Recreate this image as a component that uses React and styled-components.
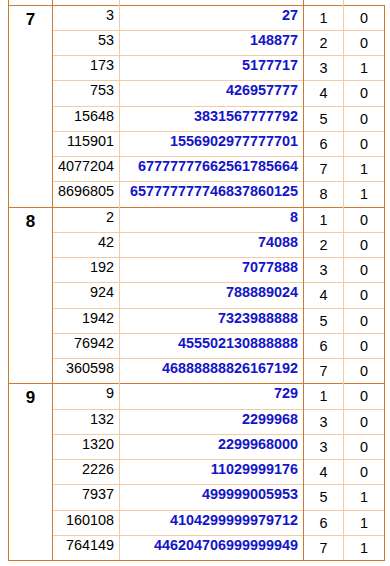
import styled, { createGlobalStyle } from 'styled-components';

const DARK = '#cc7a33';
const LIGHT = '#f2cba5';

const groups = [
  {
    k: 7,
    rows: [
      ['3', '27', 1, 0],
      ['53', '148877', 2, 0],
      ['173', '5177717', 3, 1],
      ['753', '426957777', 4, 0],
      ['15648', '3831567777792', 5, 0],
      ['115901', '1556902977777701', 6, 0],
      ['4077204', '67777777662561785664', 7, 1],
      ['8696805', '657777777746837860125', 8, 1],
    ],
  },
  {
    k: 8,
    rows: [
      ['2', '8', 1, 0],
      ['42', '74088', 2, 0],
      ['192', '7077888', 3, 0],
      ['924', '788889024', 4, 0],
      ['1942', '7323988888', 5, 0],
      ['76942', '455502130888888', 6, 0],
      ['360598', '46888888826167192', 7, 0],
    ],
  },
  {
    k: 9,
    rows: [
      ['9', '729', 1, 0],
      ['132', '2299968', 3, 0],
      ['1320', '2299968000', 3, 0],
      ['2226', '11029999176', 4, 0],
      ['7937', '499999005953', 5, 1],
      ['160108', '4104299999979712', 6, 1],
      ['764149', '446204706999999949', 7, 1],
    ],
  },
];

const GlobalStyle = createGlobalStyle`
  html, body {
    margin: 0;
    background: #fff;
  }
  body {
    font-family: 'Liberation Sans', Arial, sans-serif;
  }
`;

const Page = styled.div`
  padding: 0 5px 0 8px;
`;

const Table = styled.table`
  width: 377px;
  table-layout: fixed;
  border-collapse: collapse;
  font-size: 14.4px;
  color: #000;
`;

const StubRow = styled.tr`
  height: 4.5px;
`;

const Row = styled.tr`
  height: 25.25px;
`;

const Cell = styled.td`
  border: 0;
  border-left: 1px solid ${({ $leftDark }) => ($leftDark ? DARK : LIGHT)};
  border-top: 1px solid ${({ $topDark }) => ($topDark ? DARK : LIGHT)};
  border-bottom: ${({ $last }) => ($last ? `1px solid ${DARK}` : '0')};
  white-space: nowrap;
  line-height: normal;
`;

const StubCell = styled(Cell)`
  border-top: 0;
  padding: 0;
  height: 4.5px;
`;

const GroupCell = styled(Cell)`
  vertical-align: top;
  text-align: center;
  padding: 4px 0 0;
  font-size: 17px;
  font-weight: 700;
`;

const NumCell = styled(Cell)`
  vertical-align: top;
  text-align: right;
  padding: 1px 5px 0 0;
`;

const CubeCell = styled(NumCell)`
  font-weight: 700;
  color: #1414c8;
`;

const SmallCell = styled(Cell)`
  vertical-align: middle;
  text-align: center;
  padding: 0;
  border-right: ${({ $end }) => ($end ? `1px solid ${DARK}` : '0')};
`;

export default function App() {
  return (
    <>
      <GlobalStyle />
      <Page>
        <Table>
          <colgroup>
            <col style={{ width: 44 }} />
            <col style={{ width: 67 }} />
            <col style={{ width: 184 }} />
            <col style={{ width: 40 }} />
            <col style={{ width: 41 }} />
          </colgroup>
          <tbody>
            <StubRow>
              <StubCell $leftDark />
              <StubCell $leftDark />
              <StubCell />
              <StubCell $leftDark />
              <StubCell />
            </StubRow>
            {groups.map((g, gi) =>
              g.rows.map(([n, cube, idx, flag], ri) => {
                const first = ri === 0;
                const last = gi === groups.length - 1 && ri === g.rows.length - 1;
                return (
                  <Row key={`${g.k}-${n}`}>
                    {first && (
                      <GroupCell
                        rowSpan={g.rows.length}
                        $leftDark
                        $topDark
                        $last={gi === groups.length - 1}
                      >
                        {g.k}
                      </GroupCell>
                    )}
                    <NumCell $leftDark $topDark={first} $last={last}>{n}</NumCell>
                    <CubeCell $topDark={first} $last={last}>{cube}</CubeCell>
                    <SmallCell $leftDark $topDark={first} $last={last}>{idx}</SmallCell>
                    <SmallCell $topDark={first} $last={last} $end>{flag}</SmallCell>
                  </Row>
                );
              })
            )}
          </tbody>
        </Table>
      </Page>
    </>
  );
}
